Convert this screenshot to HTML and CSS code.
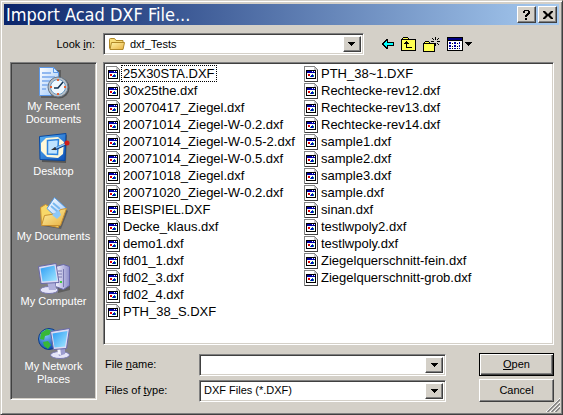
FILE: index.html
```
<!DOCTYPE html>
<html lang="en">
<head>
<meta charset="utf-8">
<meta name="viewport" content="width=device-width, initial-scale=1">
<title>Import Acad DXF File...</title>
<link rel="stylesheet" href="styles.css">
</head>
<body>
<svg class="defs" aria-hidden="true">
  <defs>
    <linearGradient id="paper" x1="0" y1="0" x2="1" y2="1"><stop offset="0" stop-color="#fff"/><stop offset="1" stop-color="#9cc6f8"/></linearGradient>
    <linearGradient id="blue" x1="0" y1="0" x2="1" y2="1"><stop offset="0" stop-color="#5ab4f8"/><stop offset="1" stop-color="#0c50b8"/></linearGradient>
    <linearGradient id="screen" x1="0" y1="0" x2="1" y2="1"><stop offset="0" stop-color="#2c9cf4"/><stop offset="1" stop-color="#a4e8ff"/></linearGradient>
    <linearGradient id="gold" x1="0" y1="0" x2="1" y2="1"><stop offset="0" stop-color="#fff4a8"/><stop offset="1" stop-color="#e8b040"/></linearGradient>
    <linearGradient id="case" x1="0" y1="0" x2="1" y2="0"><stop offset="0" stop-color="#f4f4ff"/><stop offset="1" stop-color="#8c8cc8"/></linearGradient>
    <radialGradient id="globe" cx=".35" cy=".3" r=".75"><stop offset="0" stop-color="#80c8ff"/><stop offset="1" stop-color="#0844a8"/></radialGradient>
  </defs>
  <symbol id="file" viewBox="0 0 14 16">
    <path fill="#848484" d="M0 0h11v1h1v1h1v1h1v13H0z"/>
    <path fill="#fff" d="M1 1h9v3h3v11H1z"/>
    <path fill="#c6c6c6" d="M10 1h1v1h1v1h1v1h-3z"/>
    <path fill="#424242" d="M13 4h1v12H1v-1h12z"/>
    <path d="M2 4h10v9H2z"/>
    <path fill="#0000a5" d="M3 5h8v2H3z"/>
    <path fill="#fff" d="M3 7h8v5H3zM8 5h1v1H8zM10 5h1v1h-1z"/>
    <path fill="#e00000" d="M4 8h2v2H4z"/><path fill="#008484" d="M6 10h1v1H6zM8 8h1v1H8zM9 9h1v2H9z"/><path fill="#0000c6" d="M7 9h2v2H7z"/>
  </symbol>
  <symbol id="drop" viewBox="0 0 7 4"><path d="M0 0h7v1H6v1H5v1H4v1H3V3H2V2H1V1H0z"/></symbol>
</svg>

<main class="dialog">
  <header class="titlebar">
    <h1>Import Acad DXF File...</h1>
    <button class="raised caption" type="button" aria-label="Help"><svg width="7" height="10" viewBox="0 0 7 10"><path d="M1 0h5v1h1v3H6v1H5v1H4v1H2V5h1V4h1V3h1V1H2v2H0V1h1zM2 8h2v2H2z"/></svg></button>
    <button class="raised caption" type="button" aria-label="Close"><svg width="10" height="8" viewBox="0 0 10 8"><path d="M0 0h2l3 3 3-3h2v1L7 4l3 3v1H8L5 5 2 8H0V7l3-3-3-3z"/></svg></button>
  </header>

  <div class="lookin">
    <label for="look">Look <u>i</u>n:</label>
    <div class="combo with-icon">
      <svg class="folder" width="16" height="14" viewBox="0 0 16 14"><path fill="#f8dc78" stroke="#b08828" d="M.5 11.500v-9q0-1 1-1h4l1.500 2h7v3"/><path fill="url(#gold)" stroke="#b08828" d="M1 12.500 2.500 5.500h13L14 12.500z"/></svg>
      <select id="look"><option>dxf_Tests</option></select>
      <span class="raised arrow"><svg width="7" height="4"><use href="#drop"/></svg></span>
    </div>
    <nav class="tools" aria-label="Folder tools">
      <button type="button" aria-label="Back"><svg width="12" height="10" viewBox="0 0 12 10"><path d="M4 0h2v3h6v4H6v3H4V9H3V8H2V7H1V6H0V4h1V3h1V2h1V1h1z"/><path fill="#0ff" d="M4 2h1v2h6v2H5v2H4V7H3V6H2V4h1V3h1z"/></svg></button>
      <button type="button" aria-label="Up one level"><svg width="15" height="14" viewBox="0 0 15 14"><path d="M2 0h5v1h1v1h7v12H0V2h1V1h1z"/><path fill="#ffff50" d="M2 1h5v1H2zM1 3h13v10H1z"/><path d="M5 4h1v1h1v1h1v1H6v3h5v1H5V7H3V6h1V5h1z"/></svg></button>
      <button type="button" aria-label="New folder"><svg width="17" height="15" viewBox="0 0 17 15"><path d="M2 4h4v1h1v1h5v9H0V6h1V5h1z"/><path fill="#ffff50" d="M2 5h4v1H2zM1 7h10v7H1z"/><path d="M12 0h1v3h-1zM9 1h1v1H9zM10 2h1v1h-1zM15 1h1v1h-1zM14 2h1v1h-1zM8 4h3v1H8zM14 4h3v1h-3zM12 6h1v3h-1zM10 6h1v1h-1zM14 6h1v1h-1zM15 7h1v1h-1z"/></svg></button>
      <button class="views" type="button" aria-label="Views"><svg width="16" height="14" viewBox="0 0 16 14"><path d="M0 0h16v14H0z"/><path fill="#000084" d="M1 1h14v2H1z"/><path fill="#fff" d="M1 4h14v9H1z"/><path fill="#0000a5" d="M2 5h2v2H2zM7 5h2v2H7zM2 8h2v2H2zM7 8h2v2H7zM2 11h2v1H2zM7 11h2v1H7zM12 5h1v2h-1zM12 8h1v2h-1zM12 11h1v1h-1z"/><path d="M5 6h1v1H5zM10 6h1v1h-1zM5 9h1v1H5zM10 9h1v1h-1zM5 11h1v1H5zM10 11h1v1h-1z"/></svg><svg width="7" height="4"><use href="#drop"/></svg></button>
    </nav>
  </div>

  <div class="body">
    <nav class="places sunken" aria-label="Places">
      <a href="#recent"><svg width="32" height="32" viewBox="0 0 32 32"><path fill="#0004" d="M3 3h20v28H3z"/><path fill="url(#paper)" stroke="#5c98e8" d="M1.500.5h14l5 5v23h-19z"/><path fill="#d8ecff" stroke="#5c98e8" d="M15.500.5v5h5z"/><path stroke="#90b8f0" stroke-width="2" d="M4 6h9M4 10h13M4 14h10M4 18h6M4 22h4"/><circle cx="21" cy="21" r="10.500" fill="#555"/><circle cx="20" cy="20" r="10" fill="#b8c0c8" stroke="#687888"/><circle cx="20" cy="20" r="7.500" fill="#eef8ff" stroke="#6898c0"/><path fill="none" stroke="#103050" stroke-width="1.500" d="M25 15l-5 6h-4"/><path stroke="#e86030" stroke-width="2" d="M20 12v2M20 26v2M12 20h2M26 20h2"/></svg><span>My Recent<br>Documents</span></a>
      <a href="#desktop"><svg width="32" height="32" viewBox="0 0 32 32"><path fill="#0005" d="M3 6l26-3-1 28L4 30z"/><path fill="url(#blue)" stroke="#0848a0" d="M1.500 4.500 28 1.500l-1 27-25-1z"/><path fill="#fff8d8" d="M8 6l12-1 6 5-1 12-5 4-11-1-6-6V11z"/><path fill="#c0e4ff" stroke="#2c84e0" stroke-width="1.500" d="M9.500 8.500l11-1-1 15-10-.5z"/><path stroke="#103c80" stroke-width="3" d="M17 17l11-5"/><path stroke="#80c0f8" stroke-width="1.500" d="M18 16l9-4"/><circle cx="29" cy="11" r="2.500" fill="#d01c18"/><path fill="#333" d="M13 18l4-3 1 3z"/></svg><span>Desktop</span></a>
      <a href="#documents"><svg width="32" height="32" viewBox="0 0 32 32"><path fill="#0004" d="M5 29l18 3 7-18-4-3z"/><path fill="#f8d868" stroke="#c89030" d="M2.500 10.500l5-3 4 2 13 4-4 17L3.500 27z"/><path fill="url(#paper)" stroke="#4c98e8" d="M9 11.500 16.500.5l12 11-8 11z"/><path stroke="#78b8f0" stroke-width="2" d="M15 6l7 6M13 9l7 6"/><path fill="url(#gold)" stroke="#c89030" d="M3.500 28.500l3-10 13-2 3-4 6-1-6 17z"/><path fill="#8cc8f8" d="M14 18l7-5 2 5-4 4z"/></svg><span>My Documents</span></a>
      <a href="#computer"><svg width="32" height="32" viewBox="0 0 32 32"><path fill="#0004" d="M18 6l14 2v20l-12 3z"/><path fill="url(#case)" stroke="#6868a8" d="M17.500 4.500l8-2 6 2v19l-6 4-8-3z"/><path stroke="#7878b0" d="M25.500 7v18M20 9h4M20 12h4M20 15h4"/><path fill="#40c840" d="M22 19h2v2h-2z"/><ellipse cx="11" cy="28" rx="9" ry="3.500" fill="#e4e4f8" stroke="#7878b0"/><path fill="#b0b0dc" d="M9 19h8l1 9h-7z"/><path fill="#dcdcf4" stroke="#6868a8" d="M.5 4.500 18 1.500l3 19-18 1z"/><path fill="url(#screen)" d="M2.500 6.500l14-3 2.500 15-14.500 1z"/></svg><span>My Computer</span></a>
      <a href="#network"><svg width="32" height="32" viewBox="0 0 32 32"><circle cx="11" cy="12" r="10.500" fill="url(#globe)" stroke="#0c3c88"/><path fill="#38b838" d="M3 6l6-4 5 2-3 4-4 1-1 4-4-1zM5 15l5-1 3 4-3 4-4-3zM15 3l4 4-3 2z"/><ellipse cx="22" cy="28" rx="9.500" ry="3.500" fill="#e4e4f8" stroke="#7878b0"/><path fill="#9c9cd0" d="M19 20h8v7l-6 2z"/><path fill="#f4f4ff" d="M19 20h3l1 8-3-1z"/><path fill="#dcdcf4" stroke="#6868a8" d="M12.500 4.500 31.500 1.500l-3 20-13 1z"/><path fill="url(#screen)" d="M14.500 6.500l15-2.500-2.500 15.500-10.500 1z"/></svg><span>My Network<br>Places</span></a>
    </nav>

    <div class="content">
      <ul class="files sunken">
        <li><svg><use href="#file"/></svg><span class="focused">25X30STA.DXF</span></li>
        <li><svg><use href="#file"/></svg><span>30x25the.dxf</span></li>
        <li><svg><use href="#file"/></svg><span>20070417_Ziegel.dxf</span></li>
        <li><svg><use href="#file"/></svg><span>20071014_Ziegel-W-0.2.dxf</span></li>
        <li><svg><use href="#file"/></svg><span>20071014_Ziegel-W-0.5-2.dxf</span></li>
        <li><svg><use href="#file"/></svg><span>20071014_Ziegel-W-0.5.dxf</span></li>
        <li><svg><use href="#file"/></svg><span>20071018_Ziegel.dxf</span></li>
        <li><svg><use href="#file"/></svg><span>20071020_Ziegel-W-0.2.dxf</span></li>
        <li><svg><use href="#file"/></svg><span>BEISPIEL.DXF</span></li>
        <li><svg><use href="#file"/></svg><span>Decke_klaus.dxf</span></li>
        <li><svg><use href="#file"/></svg><span>demo1.dxf</span></li>
        <li><svg><use href="#file"/></svg><span>fd01_1.dxf</span></li>
        <li><svg><use href="#file"/></svg><span>fd02_3.dxf</span></li>
        <li><svg><use href="#file"/></svg><span>fd02_4.dxf</span></li>
        <li><svg><use href="#file"/></svg><span>PTH_38_S.DXF</span></li>
        <li><svg><use href="#file"/></svg><span>PTH_38~1.DXF</span></li>
        <li><svg><use href="#file"/></svg><span>Rechtecke-rev12.dxf</span></li>
        <li><svg><use href="#file"/></svg><span>Rechtecke-rev13.dxf</span></li>
        <li><svg><use href="#file"/></svg><span>Rechtecke-rev14.dxf</span></li>
        <li><svg><use href="#file"/></svg><span>sample1.dxf</span></li>
        <li><svg><use href="#file"/></svg><span>sample2.dxf</span></li>
        <li><svg><use href="#file"/></svg><span>sample3.dxf</span></li>
        <li><svg><use href="#file"/></svg><span>sample.dxf</span></li>
        <li><svg><use href="#file"/></svg><span>sinan.dxf</span></li>
        <li><svg><use href="#file"/></svg><span>testlwpoly2.dxf</span></li>
        <li><svg><use href="#file"/></svg><span>testlwpoly.dxf</span></li>
        <li><svg><use href="#file"/></svg><span>Ziegelquerschnitt-fein.dxf</span></li>
        <li><svg><use href="#file"/></svg><span>Ziegelquerschnitt-grob.dxf</span></li>
      </ul>

      <form class="fields">
        <label for="name">File <u>n</u>ame:</label>
        <div class="combo">
          <input id="name" type="text">
          <button class="raised arrow" type="button" aria-label="Recent names"><svg width="7" height="4"><use href="#drop"/></svg></button>
        </div>
        <button class="raised action default" type="button"><span><u>O</u>pen</span></button>
        <label for="type">Files of <u>t</u>ype:</label>
        <div class="combo">
          <select id="type"><option>DXF Files (*.DXF)</option></select>
          <span class="raised arrow"><svg width="7" height="4"><use href="#drop"/></svg></span>
        </div>
        <button class="raised action" type="button">Cancel</button>
      </form>
    </div>
  </div>
  <svg class="grip" width="14" height="14" viewBox="0 0 14 14"><path stroke="#fff" d="M0 14 14 0M4 14 14 4M8 14l6-6"/><path stroke="#808080" stroke-width="1.500" d="M1.500 14 14 1.500M5.500 14 14 5.500M9.500 14 14 9.500"/></svg>
</main>
</body>
</html>
```
FILE: styles.css
```
:root {
  --face: #d4d0c8;
  --shadow: #808080;
  --dark: #404040;
  --ui: "Liberation Sans", Arial, sans-serif;
  --title: "DejaVu Sans Condensed", "DejaVu Sans", sans-serif;
}

* { box-sizing: border-box; }

body {
  margin: 0;
  color: #000;
  background: var(--face);
  font: 11px/13px var(--ui);
}

.defs { position: absolute; width: 0; height: 0; }
svg { display: block; flex: none; }
use, .tools svg { shape-rendering: crispEdges; }
u { text-underline-offset: 1px; }

button, input, select { font: inherit; color: inherit; border-radius: 0; }
button { padding: 0; }

.dialog {
  position: relative;
  display: flex;
  flex-direction: column;
  min-height: 100vh;
  padding: 2px;
  background: var(--face);
  border: 1px solid;
  border-color: var(--face) var(--dark) var(--dark) var(--face);
  box-shadow: inset 1px 1px #fff, inset -1px -1px var(--shadow);
}

.raised {
  display: flex;
  align-items: center;
  justify-content: center;
  background: var(--face);
  border: 1px solid;
  border-color: #fff var(--dark) var(--dark) #fff;
  box-shadow: inset -1px -1px var(--shadow);
}

.sunken, .combo {
  border: 1px solid;
  border-color: var(--shadow) #fff #fff var(--shadow);
  box-shadow: inset 1px 1px var(--dark), inset -1px -1px var(--face);
}

.titlebar {
  display: flex;
  align-items: center;
  gap: 2px;
  height: 21px;
  margin: 1px;
  padding: 0 2px;
  background: linear-gradient(to right, #0a246a, #a6caf0);
}

.titlebar h1 {
  flex: 1;
  margin: 0;
  color: #fff;
  font: 18px/21px var(--title);
}

.caption { width: 19px; height: 17px; }

.lookin {
  display: flex;
  align-items: center;
  gap: 8px;
  padding: 7px;
}

.lookin label { width: 85px; text-align: right; }

.combo {
  position: relative;
  display: flex;
  height: 22px;
  padding: 2px;
  background: #fff;
}

.lookin .combo { width: 48%; }

.combo input, .combo select {
  flex: 1;
  min-width: 0;
  padding: 0 2px;
  border: 0;
  outline: 0;
  background: none;
  appearance: none;
}

.with-icon { padding-left: 5px; }
.with-icon select { padding-left: 5px; }
.folder { align-self: center; }
.arrow { width: 18px; pointer-events: none; }

.tools { display: flex; align-items: center; gap: 7px; margin-left: 10px; }
.tools button { display: flex; align-items: center; gap: 2px; border: 0; background: none; }

.body {
  flex: 1;
  display: grid;
  grid-template-columns: 87px minmax(0, 1fr);
  gap: 6px;
  padding: 0 6px 10px 7px;
}

.places {
  display: grid;
  grid-auto-rows: 65px;
  margin-bottom: 2px;
  padding: 4px 0;
  background: var(--shadow);
}

.places a {
  display: flex;
  flex-direction: column;
  align-items: center;
  gap: 1px;
  color: #fff;
  text-align: center;
  text-decoration: none;
}

.content { display: flex; flex-direction: column; gap: 8px; }

.files {
  flex: 1;
  display: grid;
  grid-template-rows: repeat(15, 17px);
  grid-auto-flow: column;
  grid-auto-columns: 198px;
  margin: 0;
  padding: 2px;
  background: #fff;
  list-style: none;
  font: 13px/15px var(--ui);
}

.files li { display: flex; align-items: center; gap: 1px; }
.files svg { width: 14px; height: 16px; }
.files span { padding: 0 1px; border: 1px solid transparent; }
.files .focused { border: 1px dotted #000; }

.fields {
  display: grid;
  grid-template-columns: 94px minmax(0, 1fr) 75px;
  row-gap: 3px;
  align-items: center;
  padding-left: 2px;
}

.fields .combo { margin-right: 33px; }
.action { height: 23px; }
.default { border-color: #000; box-shadow: inset 1px 1px #fff, inset -1px -1px var(--dark), inset -2px -2px var(--shadow); }

.grip { position: absolute; right: 2px; bottom: 2px; }
```
